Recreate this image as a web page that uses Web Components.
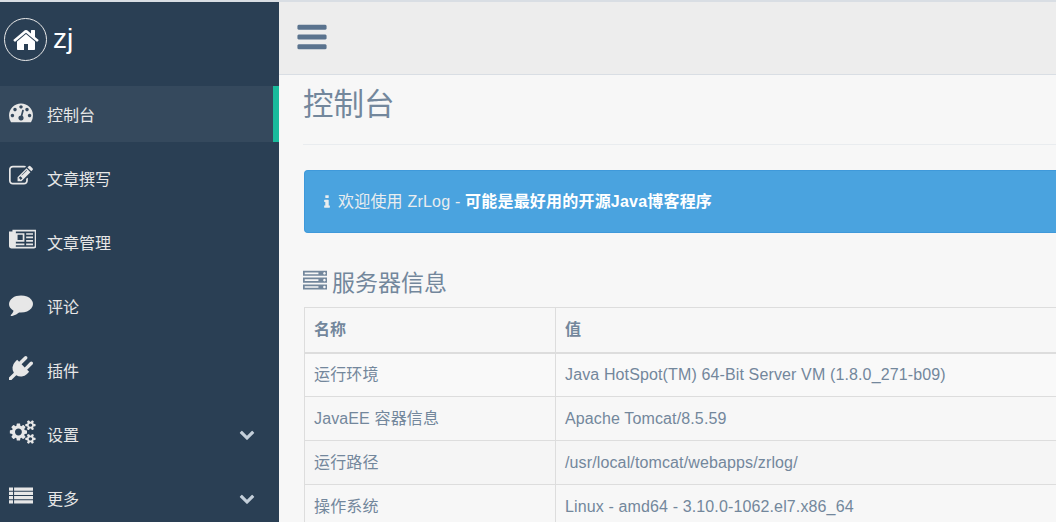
<!DOCTYPE html>
<html lang="zh">
<head>
<meta charset="utf-8">
<title>ZrLog</title>
<style>
  html, body { margin: 0; height: 522px; overflow: hidden; background: #f7f7f7; }
  body { font-family: "Liberation Sans", "Noto Sans CJK SC", sans-serif; font-size: 16px; color: #73879c; }
</style>
</head>
<body>
<admin-page>
  <side-bar slot="side" site="zj">
    <nav-item icon="tachometer" active>控制台</nav-item>
    <nav-item icon="edit">文章撰写</nav-item>
    <nav-item icon="newspaper">文章管理</nav-item>
    <nav-item icon="comment">评论</nav-item>
    <nav-item icon="plug">插件</nav-item>
    <nav-item icon="cogs" more>设置</nav-item>
    <nav-item icon="list" more>更多</nav-item>
  </side-bar>
  <top-nav slot="top"></top-nav>
  <page-title>控制台</page-title>
  <info-alert>欢迎使用 ZrLog - <b>可能是最好用的开源Java博客程序</b></info-alert>
  <section-title icon="server">服务器信息</section-title>
  <info-table></info-table>
</admin-page>

<script>
const ICONS = {
  bars: [1792, 'M1664 1344v128q0 26-19 45t-45 19h-1408q-26 0-45-19t-19-45v-128q0-26 19-45t45-19h1408q26 0 45 19t19 45zm0-512v128q0 26-19 45t-45 19h-1408q-26 0-45-19t-19-45v-128q0-26 19-45t45-19h1408q26 0 45 19t19 45zm0-512v128q0 26-19 45t-45 19h-1408q-26 0-45-19t-19-45v-128q0-26 19-45t45-19h1408q26 0 45 19t19 45z'],
  home: [1792, 'M1472 992v480q0 26-19 45t-45 19h-384v-384h-256v384h-384q-26 0-45-19t-19-45v-480q0-1 .5-3t.5-3l575-474 575 474q1 2 1 6zm223-69l-62 74q-8 9-21 11h-3q-13 0-21-7l-692-577-692 577q-12 8-24 7-13-2-21-11l-62-74q-8-10-7-23.5t11-21.5l719-599q32-26 76-26t76 26l244 204v-195q0-14 9-23t23-9h192q14 0 23 9t9 23v408l219 182q10 8 11 21.5t-7 23.5z'],
  comment: [1792, 'M1792 896q0 174-120 321.5t-326 233-450 85.5q-70 0-145-8-198 175-460 242-49 14-114 22-17 2-30.5-9t-17.5-29v-1q-3-4-.5-12t2-10 4.5-9.5l6-9 7-8.5 8-9q7-8 31-34.5t34.5-38 31-39.5 32.5-51 27-59 26-76q-157-89-247.5-220t-90.5-281q0-130 71-248.5t191-204.5 286-136.5 348-50.5q244 0 450 85.5t326 233 120 321.5z'],
  chevron: [1792, 'M1683 808l-742 741q-19 19-45 19t-45-19l-742-741q-19-19-19-45.5t19-45.5l166-165q19-19 45-19t45 19l531 531 531-531q19-19 45-19t45 19l166 165q19 19 19 45.5t-19 45.5z'],
  plug: [1792, 'M1755 453q37 38 37 90.5t-37 90.5l-401 400 150 150-160 160q-163 163-389.5 186.5t-411.5-100.5l-362 362h-181v-181l362-362q-124-185-100.5-411.5t186.5-389.5l160-160 150 150 400-401q38-37 91-37t90 37 37 90.5-37 90.5l-400 401 234 234 401-400q38-37 91-37t90 37z'],
  info: [1792, 'M1216 1344v128q0 26-19 45t-45 19h-512q-26 0-45-19t-19-45v-128q0-26 19-45t45-19h64v-384h-64q-26 0-45-19t-19-45v-128q0-26 19-45t45-19h384q26 0 45 19t19 45v576h64q26 0 45 19t19 45zm-128-1152v192q0 26-19 45t-45 19h-256q-26 0-45-19t-19-45v-192q0-26 19-45t45-19h256q26 0 45 19t19 45z'],
  edit: [1792, 'M888 1184l116-116-152-152-116 116v56h96v96h56zm440-720q-16-16-33 1l-350 350q-17 17-1 33t33-1l350-350q17-17 1-33zm80 594v190q0 119-84.5 203.5t-203.5 84.5h-832q-119 0-203.5-84.5t-84.5-203.5v-832q0-119 84.5-203.5t203.5-84.5h832q63 0 117 25 15 7 18 23 3 17-9 29l-49 49q-14 14-32 8-23-6-45-6h-832q-66 0-113 47t-47 113v832q0 66 47 113t113 47h832q66 0 113-47t47-113v-126q0-13 9-22l64-64q15-15 35-7t20 29zm-96-738l288 288-672 672h-288v-288zm444 132l-92 92-288-288 92-92q28-28 68-28t68 28l152 152q28 28 28 68t-28 68z'],
  tachometer: [1792, 'M384 1152q0-53-37.5-90.5t-90.5-37.5-90.5 37.5-37.5 90.5 37.5 90.5 90.5 37.5 90.5-37.5 37.5-90.5zm192-448q0-53-37.5-90.5t-90.5-37.5-90.5 37.5-37.5 90.5 37.5 90.5 90.5 37.5 90.5-37.5 37.5-90.5zm428 481l101-382q6-26-7.5-48.5t-38.5-29.5-48 6.5-30 39.5l-101 382q-60 5-107 43.5t-63 98.5q-20 77 20 146t117 89 146-20 89-117q16-60-6-117t-72-91zm660-33q0-53-37.5-90.5t-90.5-37.5-90.5 37.5-37.5 90.5 37.5 90.5 90.5 37.5 90.5-37.5 37.5-90.5zm-640-640q0-53-37.5-90.5t-90.5-37.5-90.5 37.5-37.5 90.5 37.5 90.5 90.5 37.5 90.5-37.5 37.5-90.5zm448 192q0-53-37.5-90.5t-90.5-37.5-90.5 37.5-37.5 90.5 37.5 90.5 90.5 37.5 90.5-37.5 37.5-90.5zm320 448q0 261-141 483-19 29-54 29h-1402q-35 0-54-29-141-221-141-483 0-182 71-348t191-286 286-191 348-71 348 71 286 191 191 286 71 348z'],
  cogs: [2048, 'M960 896q0-106-75-181t-181-75-181 75-75 181 75 181 181 75 181-75 75-181zm768 512q0-52-38-90t-90-38-90 38-38 90q0 53 37.5 90.5t90.5 37.5 90.5-37.5 37.5-90.5zm0-1024q0-52-38-90t-90-38-90 38-38 90q0 53 37.5 90.5t90.5 37.5 90.5-37.5 37.5-90.5zm-384 421v185q0 10-7 19.5t-16 10.5l-155 24q-11 35-32 76 34 48 90 115 7 11 7 20 0 12-7 19-23 30-82.5 89.5t-78.5 59.5q-11 0-21-7l-115-90q-37 19-77 31-11 108-23 155-7 24-30 24h-186q-11 0-20-7.5t-10-17.5l-23-153q-34-10-75-31l-118 89q-7 7-20 7-11 0-21-8-144-133-144-160 0-9 7-19 10-14 41-53t47-61q-23-44-35-82l-152-24q-10-1-17-9.5t-7-19.5v-185q0-10 7-19.5t16-10.5l155-24q11-35 32-76-34-48-90-115-7-11-7-20 0-12 7-20 22-30 82-89t79-59q11 0 21 7l115 90q34-18 77-32 11-108 23-154 7-24 30-24h186q11 0 20 7.5t10 17.5l23 153q34 10 75 31l118-89q8-7 20-7 11 0 21 8 144 133 144 160 0 8-7 19-12 16-42 54t-45 60q23 48 34 82l152 23q10 2 17 10.5t7 19.5zm640 533v140q0 16-149 31-12 27-30 52 51 113 51 138 0 4-4 7-122 71-124 71-8 0-46-47t-52-68q-20 2-30 2t-30-2q-14 21-52 68t-46 47q-2 0-124-71-4-3-4-7 0-25 51-138-18-25-30-52-149-15-149-31v-140q0-16 149-31 13-29 30-52-51-113-51-138 0-4 4-7 4-2 35-20t59-34 30-16q8 0 46 46.5t52 67.5q20-2 30-2t30 2q51-71 92-112l6-2q4 0 124 70 4 3 4 7 0 25-51 138 17 23 30 52 149 15 149 31zm0-1024v140q0 16-149 31-12 27-30 52 51 113 51 138 0 4-4 7-122 71-124 71-8 0-46-47t-52-68q-20 2-30 2t-30-2q-14 21-52 68t-46 47q-2 0-124-71-4-3-4-7 0-25 51-138-18-25-30-52-149-15-149-31v-140q0-16 149-31 13-29 30-52-51-113-51-138 0-4 4-7 4-2 35-20t59-34 30-16q8 0 46 46.5t52 67.5q20-2 30-2t30 2q51-71 92-112l6-2q4 0 124 70 4 3 4 7 0 25-51 138 17 23 30 52 149 15 149 31z'],
  newspaper: [2048, 'M1024 512h-384v384h384v-384zm128 640v128h-640v-128h640zm0-768v640h-640v-640h640zm640 768v128h-512v-128h512zm0-256v128h-512v-128h512zm0-256v128h-512v-128h512zm0-256v128h-512v-128h512zm128 960v-1088h-1408v1088q0 33-11 64h1355q26 0 45-19t19-45zm128-1216v1216q0 80-56 136t-136 56h-1664q-80 0-136-56t-56-136v-1088h256v-128h1792z'],
  server: [1792, 'M128 1408h1024v-128h-1024v128zm0-512h1024v-128h-1024v128zm1568 448q0-40-28-68t-68-28-68 28-28 68 28 68 68 28 68-28 28-68zm-1568-960h1024v-128h-1024v128zm1568 448q0-40-28-68t-68-28-68 28-28 68 28 68 68 28 68-28 28-68zm0-512q0-40-28-68t-68-28-68 28-28 68 28 68 68 28 68-28 28-68zm96 832v384h-1792v-384h1792zm0-512v384h-1792v-384h1792zm0-512v384h-1792v-384h1792z'],
  list: [1792, 'M0 256h300v240h-300zM380 256h1412v240h-1412zM0 576h300v240h-300zM380 576h1412v240h-1412zM0 896h300v240h-300zM380 896h1412v240h-1412zM0 1216h300v240h-300zM380 1216h1412v240h-1412z']
}

// one font-awesome style glyph, sized like a font: size = the em box
customElements.define('fa-icon', class extends HTMLElement {
  connectedCallback () {
    if (this.shadowRoot) return
    const [w, d] = ICONS[this.getAttribute('name')]
    const size = Number(this.getAttribute('size') || 24)
    this.attachShadow({ mode: 'open' }).innerHTML = `
      <style>
        :host { display: block; flex: none; line-height: 0; }
        svg { display: block; fill: currentColor; }
      </style>
      <svg width="${size * w / 1792}" height="${size}" viewBox="0 0 ${w} 1792"><path d="${d}"/></svg>`
  }
})

const layoutTpl = document.createElement('template')
layoutTpl.innerHTML = `
  <style>
    :host { display: flex; width: 1056px; height: 522px; border-top: 2px solid #d9dee4; box-sizing: border-box; }
    .side { flex: none; width: 279px; }
    .main { flex: 1; min-width: 0; }
    .content { padding-left: 25px; }
  </style>
  <div class="side"><slot name="side"></slot></div>
  <div class="main">
    <slot name="top"></slot>
    <div class="content"><slot></slot></div>
  </div>`
customElements.define('admin-page', class extends HTMLElement {
  constructor () {
    super()
    this.attachShadow({ mode: 'open' }).appendChild(layoutTpl.content.cloneNode(true))
  }
})

const sideTpl = document.createElement('template')
sideTpl.innerHTML = `
  <style>
    :host { display: block; height: 520px; background: #2a3f54; overflow: hidden; color: #fff; }
    .brand { display: flex; align-items: center; gap: 6px; height: 84px; padding-left: 4px; box-sizing: border-box; }
    .logo { width: 43px; height: 43px; box-sizing: border-box; border: 1px solid #e8e8e8; border-radius: 50%; display: flex; align-items: center; justify-content: center; margin-top: -9px; }
    .name { font-size: 28px; line-height: 32px; margin-top: -11px; }
    nav { display: flex; flex-direction: column; gap: 8px; }
  </style>
  <div class="brand">
    <div class="logo"><fa-icon name="home" size="28"></fa-icon></div>
    <span class="name"></span>
  </div>
  <nav><slot></slot></nav>`
customElements.define('side-bar', class extends HTMLElement {
  constructor () {
    super()
    this.attachShadow({ mode: 'open' }).appendChild(sideTpl.content.cloneNode(true))
    this.shadowRoot.querySelector('.name').textContent = this.getAttribute('site')
  }
})

const itemTpl = document.createElement('template')
itemTpl.innerHTML = `
  <style>
    :host { display: flex; align-items: center; height: 56px; padding-left: 9px; box-sizing: border-box; color: #e7e7e7; font-size: 16px; }
    :host([active]) { background: #35495d; border-right: 6px solid #1abb9c; }
    .icon { width: 38px; margin-top: -5px; }
    .label { flex: 1; line-height: 20px; padding-top: 4px; }
    .more { margin-right: 24px; color: #c4cfda; }
    .more[hidden] { display: none; }
  </style>
  <div class="icon"></div>
  <span class="label"><slot></slot></span>
  <div class="more" hidden><fa-icon name="chevron" size="16"></fa-icon></div>`
customElements.define('nav-item', class extends HTMLElement {
  constructor () {
    super()
    this.attachShadow({ mode: 'open' }).appendChild(itemTpl.content.cloneNode(true))
    const icon = document.createElement('fa-icon')
    icon.setAttribute('name', this.getAttribute('icon'))
    this.shadowRoot.querySelector('.icon').appendChild(icon)
    this.shadowRoot.querySelector('.more').hidden = !this.hasAttribute('more')
  }
})

const topTpl = document.createElement('template')
topTpl.innerHTML = `
  <style>
    :host { display: flex; align-items: center; height: 73px; box-sizing: border-box; padding: 0 0 2px 16px; background: #ededed; border-bottom: 1px solid #d9dee4; color: #5a738e; }
  </style>
  <fa-icon name="bars" size="34"></fa-icon>`
customElements.define('top-nav', class extends HTMLElement {
  constructor () {
    super()
    this.attachShadow({ mode: 'open' }).appendChild(topTpl.content.cloneNode(true))
  }
})

const titleTpl = document.createElement('template')
titleTpl.innerHTML = `
  <style>
    :host { display: block; height: 70px; box-sizing: border-box; border-bottom: 1px solid #e9ecef; font-size: 30.5px; line-height: 58px; margin-left: -1px; }
  </style>
  <slot></slot>`
customElements.define('page-title', class extends HTMLElement {
  constructor () {
    super()
    this.attachShadow({ mode: 'open' }).appendChild(titleTpl.content.cloneNode(true))
  }
})

const alertTpl = document.createElement('template')
alertTpl.innerHTML = `
  <style>
    :host { display: flex; align-items: center; gap: 3px; height: 63px; margin-top: 25px; padding-left: 14px; box-sizing: border-box; background: #4aa3df; border: 1px solid #3f99da; border-right: 0; border-radius: 4px 0 0 4px; color: #e9edef; font-size: 16px; letter-spacing: .2px; }
    .text { line-height: 22px; }
    ::slotted(b) { color: #fff; }
  </style>
  <fa-icon name="info" size="16"></fa-icon>
  <span class="text"><slot></slot></span>`
customElements.define('info-alert', class extends HTMLElement {
  constructor () {
    super()
    this.attachShadow({ mode: 'open' }).appendChild(alertTpl.content.cloneNode(true))
  }
})

const sectionTpl = document.createElement('template')
sectionTpl.innerHTML = `
  <style>
    :host { display: flex; align-items: center; gap: 5px; height: 74px; box-sizing: border-box; padding-top: 21px; margin-left: -1px; font-size: 23px; }
  </style>
  <div class="icon"></div>
  <span><slot></slot></span>`
customElements.define('section-title', class extends HTMLElement {
  constructor () {
    super()
    this.attachShadow({ mode: 'open' }).appendChild(sectionTpl.content.cloneNode(true))
    const icon = document.createElement('fa-icon')
    icon.setAttribute('name', this.getAttribute('icon'))
    this.shadowRoot.querySelector('.icon').appendChild(icon)
  }
})

const SERVER_INFO = [
  ['运行环境', 'Java HotSpot(TM) 64-Bit Server VM (1.8.0_271-b09)'],
  ['JavaEE 容器信息', 'Apache Tomcat/8.5.59'],
  ['运行路径', '/usr/local/tomcat/webapps/zrlog/'],
  ['操作系统', 'Linux - amd64 - 3.10.0-1062.el7.x86_64']
]

const tableTpl = document.createElement('template')
tableTpl.innerHTML = `
  <style>
    :host { display: block; }
    table { border-collapse: collapse; width: 100%; table-layout: fixed; font-size: 16px; line-height: 20px; }
    th, td { border: 1px solid #ddd; border-right-width: 0; height: 44px; padding: 0 9px; text-align: left; box-sizing: border-box; }
    th:first-child, td:first-child { width: 251px; border-right-width: 1px; }
    td { letter-spacing: .13px; }
    th { height: 45px; padding-top: 1px; border-bottom-width: 2px; font-weight: bold; }
    tbody tr:nth-child(odd) td { background: #f9f9f9; }
    tbody tr:nth-child(3) td { background: #f5f5f5; }
  </style>
  <table>
    <thead><tr><th>名称</th><th>值</th></tr></thead>
    <tbody></tbody>
  </table>`
customElements.define('info-table', class extends HTMLElement {
  constructor () {
    super()
    this.attachShadow({ mode: 'open' }).appendChild(tableTpl.content.cloneNode(true))
    const body = this.shadowRoot.querySelector('tbody')
    for (const [name, value] of SERVER_INFO) {
      const row = body.insertRow()
      row.insertCell().textContent = name
      row.insertCell().textContent = value
    }
  }
})
</script>
</body>
</html>
